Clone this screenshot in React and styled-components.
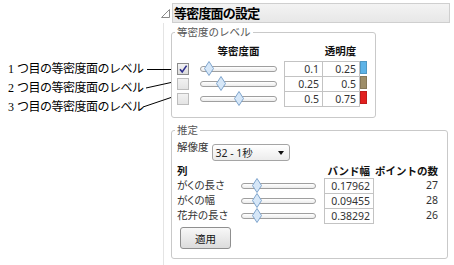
import React from "react";
import styled, { createGlobalStyle } from "styled-components";

const Global = createGlobalStyle`
  html, body { margin: 0; padding: 0; background: #fff; }
  body { font-family: "Noto Sans", "Noto Sans CJK JP", sans-serif; }
`;

const UI = `"Noto Sans", "Noto Sans CJK JP", sans-serif`;

const Page = styled.div`
  position: relative;
  width: 454px;
  height: 265px;
  overflow: hidden;
  display: flex;
  background: #fff;
`;

const Callouts = styled.div`
  width: 161px;
  flex: none;
  box-sizing: border-box;
  padding-top: 60px;
  display: flex;
  flex-direction: column;
  font-family: "Liberation Serif", "Noto Sans CJK JP", serif;
  font-size: 12px;
  color: #000;
`;

const Callout = styled.div`
  height: 19px;
  line-height: 19px;
  padding-left: 8px;
  white-space: nowrap;
  letter-spacing: -0.5px;
`;

const Num = styled.span`
  margin-right: 3px;
  letter-spacing: 0;
`;

const Leaders = styled.svg`
  position: absolute;
  left: 0;
  top: 0;
  pointer-events: none;
`;

const Outline = styled.div`
  flex: 1;
  min-width: 0;
  display: flex;
  flex-direction: column;
  font-family: ${UI};
`;

const OutlineHead = styled.div`
  display: flex;
  align-items: center;
  margin-top: 3px;
  height: 20px;
`;

const Disclosure = styled.div`
  width: 11px;
  height: 20px;
  display: flex;
  align-items: center;
`;

const TitleBar = styled.div`
  width: 278px;
  height: 20px;
  box-sizing: border-box;
  border: 1px solid #cfcfcf;
  background: linear-gradient(#f3f3f3, #e7e7e7);
  padding-left: 1px;
  font-size: 13px;
  font-weight: 700;
  line-height: 18px;
  letter-spacing: -0.8px;
  color: #000;
  white-space: nowrap;
`;

const OutlineBody = styled.div`
  flex: 1;
  margin-left: 2px;
  border-left: 1px solid #e4e4e4;
  padding: 3px 0 0 7px;
`;

const Group = styled.fieldset`
  box-sizing: border-box;
  width: ${(p) => p.$w}px;
  min-width: 0;
  margin: ${(p) => p.$mt || 0}px 0 0 0;
  padding: ${(p) => p.$pt}px ${(p) => p.$pr}px ${(p) => p.$pb}px 5px;
  border: 1px solid #c9c9c9;
  border-radius: 3px;
  background: #fff;
`;

const Legend = styled.legend`
  font-size: 10.5px;
  line-height: 12px;
  color: #555;
  padding: 0 2px;
  margin-left: -2px;
`;

const LevelGrid = styled.div`
  display: grid;
  grid-template-columns: 12px 11px 77px 7px 38px 37px 1px 7px;
  grid-template-rows: 13px 3px repeat(3, 15px);
  font-size: 10.5px;
  color: #222;
`;

const ColHead = styled.div`
  grid-row: 1;
  grid-column: ${(p) => p.$col};
  font-weight: 700;
  line-height: 13px;
  white-space: nowrap;
  text-align: ${(p) => p.$align || "center"};
  padding-right: ${(p) => p.$pr || 0}px;
  color: #111;
`;

const CheckBox = styled.div`
  grid-column: 1;
  align-self: center;
  width: 12px;
  height: 12px;
  box-sizing: border-box;
  border: 1px solid ${(p) => (p.$on ? "#8c8c8c" : "#bdbdbd")};
  background: ${(p) =>
    p.$on ? "linear-gradient(#f4f4f4, #dcdcdc)" : "linear-gradient(#f2f2f2, #e4e4e4)"};
  display: flex;
  align-items: center;
  justify-content: center;
`;

const Track = styled.div`
  grid-column: ${(p) => p.$col};
  align-self: center;
  position: relative;
  height: 6px;
  box-sizing: border-box;
  border: 1px solid #9f9f9f;
  border-radius: 3px;
  background: linear-gradient(#ffffff, #ececec);
`;

const Thumb = styled.svg`
  position: absolute;
  top: 50%;
  width: 10px;
  height: 15px;
  margin: -7.5px 0 0 -5px;
`;

const Cell = styled.div`
  grid-column: ${(p) => p.$col};
  align-self: start;
  width: ${(p) => p.$w}px;
  height: 16px;
  box-sizing: border-box;
  border: 1px solid #c3c3c3;
  background: #fff;
  text-align: right;
  padding-right: 3px;
  font-size: 10.5px;
  line-height: 14px;
  color: #333;
`;

const Swatch = styled.div`
  grid-column: 8;
  align-self: start;
  width: 7px;
  height: 13px;
  box-sizing: border-box;
  border: 1px solid rgba(0, 0, 0, 0.15);
  background: ${(p) => p.$c};
`;

const ResRow = styled.div`
  display: flex;
  align-items: flex-start;
  gap: 3px;
  height: 20px;
`;

const Label = styled.div`
  font-size: 10.5px;
  line-height: 13px;
  color: #333;
  white-space: nowrap;
  font-feature-settings: "palt";
`;

const Select = styled.div`
  margin-top: 3px;
  width: 78px;
  height: 17px;
  box-sizing: border-box;
  border: 1px solid #a5a5a5;
  border-radius: 3px;
  background: linear-gradient(#ffffff, #ececec);
  display: flex;
  align-items: center;
  justify-content: space-between;
  padding: 0 5px 0 3px;
  font-size: 10.5px;
  color: #222;
`;

const EstGrid = styled.div`
  margin-top: 4px;
  display: grid;
  grid-template-columns: 64px 75px 8px 49px 65px;
  grid-template-rows: 13px repeat(3, 15px);
  font-size: 10.5px;
  color: #333;
`;

const RowLabel = styled(Label)`
  grid-column: 1;
  align-self: center;
`;

const Count = styled.div`
  grid-column: 5;
  align-self: center;
  text-align: right;
  font-size: 10.5px;
  line-height: 13px;
  color: #333;
`;

const Button = styled.button`
  margin: 4px 0 0 3px;
  width: 51px;
  height: 22px;
  box-sizing: border-box;
  border: 1px solid #8f8f8f;
  border-radius: 3px;
  background: linear-gradient(#f8f8f8, #dcdcdc);
  font-family: ${UI};
  font-size: 10.5px;
  color: #111;
  padding: 0;
  display: block;
`;

const Diamond = () => (
  <svg width="10" height="15" viewBox="0 0 10 15">
    <polygon points="5,0.5 9.5,7.5 5,14.5 0.5,7.5" fill="#d6e7f8" stroke="#7ea4cc" strokeWidth="1" />
  </svg>
);

const Slider = ({ col, offset }) => (
  <Track $col={col}>
    <Thumb viewBox="0 0 10 15" style={{ left: offset - 1 }}>
      <polygon points="5,0.5 9.5,7.5 5,14.5 0.5,7.5" fill="#d6e7f8" stroke="#7ea4cc" strokeWidth="1" />
    </Thumb>
  </Track>
);

const levels = [
  { on: true, v: 0.1, a: "0.25", c: "#5db3e7" },
  { on: false, v: 0.25, a: "0.5", c: "#9e8e69" },
  { on: false, v: 0.5, a: "0.75", c: "#e2201f" },
];

const cols = [
  { name: "がくの長さ", bw: "0.17962", n: 27 },
  { name: "がくの幅", bw: "0.09455", n: 28 },
  { name: "花弁の長さ", bw: "0.38292", n: 26 },
];

export default function App() {
  return (
    <>
      <Global />
      <Page>
        <Callouts>
          <Callout><Num>1</Num>つ目の等密度面のレベル</Callout>
          <Callout><Num>2</Num>つ目の等密度面のレベル</Callout>
          <Callout><Num>3</Num>つ目の等密度面のレベル</Callout>
        </Callouts>
        <Outline>
          <OutlineHead>
            <Disclosure>
              <svg width="9" height="9" viewBox="0 0 9 9">
                <polygon points="0.5,8.5 8.5,8.5 8.5,0.5" fill="none" stroke="#8a8a8a" strokeWidth="1" />
              </svg>
            </Disclosure>
            <TitleBar>等密度面の設定</TitleBar>
          </OutlineHead>
          <OutlineBody>
            <Group $w={205} $pt={7} $pr={8} $pb={11}>
              <Legend>等密度のレベル</Legend>
              <LevelGrid>
                <ColHead $col={3}>等密度面</ColHead>
                <ColHead $col={6}>透明度</ColHead>
                {levels.map((l, i) => (
                  <React.Fragment key={i}>
                    <CheckBox $on={l.on} style={{ gridRow: i + 3 }}>
                      {l.on && (
                        <svg width="10" height="10" viewBox="0 0 10 10">
                          <path d="M2 5.2 L4.2 8 L8.6 1.6" fill="none" stroke="#2e2e8c" strokeWidth="1.6" />
                        </svg>
                      )}
                    </CheckBox>
                    <div style={{ gridRow: i + 3, gridColumn: 3, display: "flex", alignItems: "center" }}>
                      <Track $col={3} style={{ width: "100%" }}>
                        <Thumb viewBox="0 0 10 15" style={{ left: 2 + l.v * 74 - 1 }}>
                          <polygon points="5,0.5 9.5,7.5 5,14.5 0.5,7.5" fill="#d6e7f8" stroke="#7ea4cc" strokeWidth="1" />
                        </Thumb>
                      </Track>
                    </div>
                    <Cell $col={5} $w={39} style={{ gridRow: i + 3 }}>{l.v}</Cell>
                    <Cell $col={6} $w={38} style={{ gridRow: i + 3 }}>{l.a}</Cell>
                    <Swatch $c={l.c} style={{ gridRow: i + 3 }} />
                  </React.Fragment>
                ))}
              </LevelGrid>
            </Group>
            <Group $w={277} $mt={6} $pt={5} $pr={9} $pb={9}>
              <Legend>推定</Legend>
              <ResRow>
                <Label>解像度</Label>
                <Select>
                  <span>32 - 1秒</span>
                  <svg width="6" height="4" viewBox="0 0 6 4">
                    <polygon points="0,0 6,0 3,4" fill="#111" />
                  </svg>
                </Select>
              </ResRow>
              <EstGrid>
                <ColHead $col={1} $align="left">列</ColHead>
                <ColHead $col={4} $align="right" $pr={3}>バンド幅</ColHead>
                <ColHead $col={5} $align="right">ポイントの数</ColHead>
                {cols.map((c, i) => (
                  <React.Fragment key={c.name}>
                    <RowLabel style={{ gridRow: i + 2 }}>{c.name}</RowLabel>
                    <div style={{ gridRow: i + 2, gridColumn: 2, display: "flex", alignItems: "center" }}>
                      <Track $col={2} style={{ width: "100%" }}>
                        <Thumb viewBox="0 0 10 15" style={{ left: 15 }}>
                          <polygon points="5,0.5 9.5,7.5 5,14.5 0.5,7.5" fill="#d6e7f8" stroke="#7ea4cc" strokeWidth="1" />
                        </Thumb>
                      </Track>
                    </div>
                    <Cell $col={4} $w={50} style={{ gridRow: i + 2 }}>{c.bw}</Cell>
                    <Count style={{ gridRow: i + 2 }}>{c.n}</Count>
                  </React.Fragment>
                ))}
              </EstGrid>
              <Button>適用</Button>
            </Group>
          </OutlineBody>
        </Outline>
        <Leaders width="454" height="265" viewBox="0 0 454 265">
          <line x1="147" y1="69.5" x2="171" y2="69.5" stroke="#000" strokeWidth="1" />
          <line x1="146" y1="88" x2="171" y2="82.5" stroke="#000" strokeWidth="1" />
          <line x1="143" y1="107" x2="171" y2="97.5" stroke="#000" strokeWidth="1" />
        </Leaders>
      </Page>
    </>
  );
}
